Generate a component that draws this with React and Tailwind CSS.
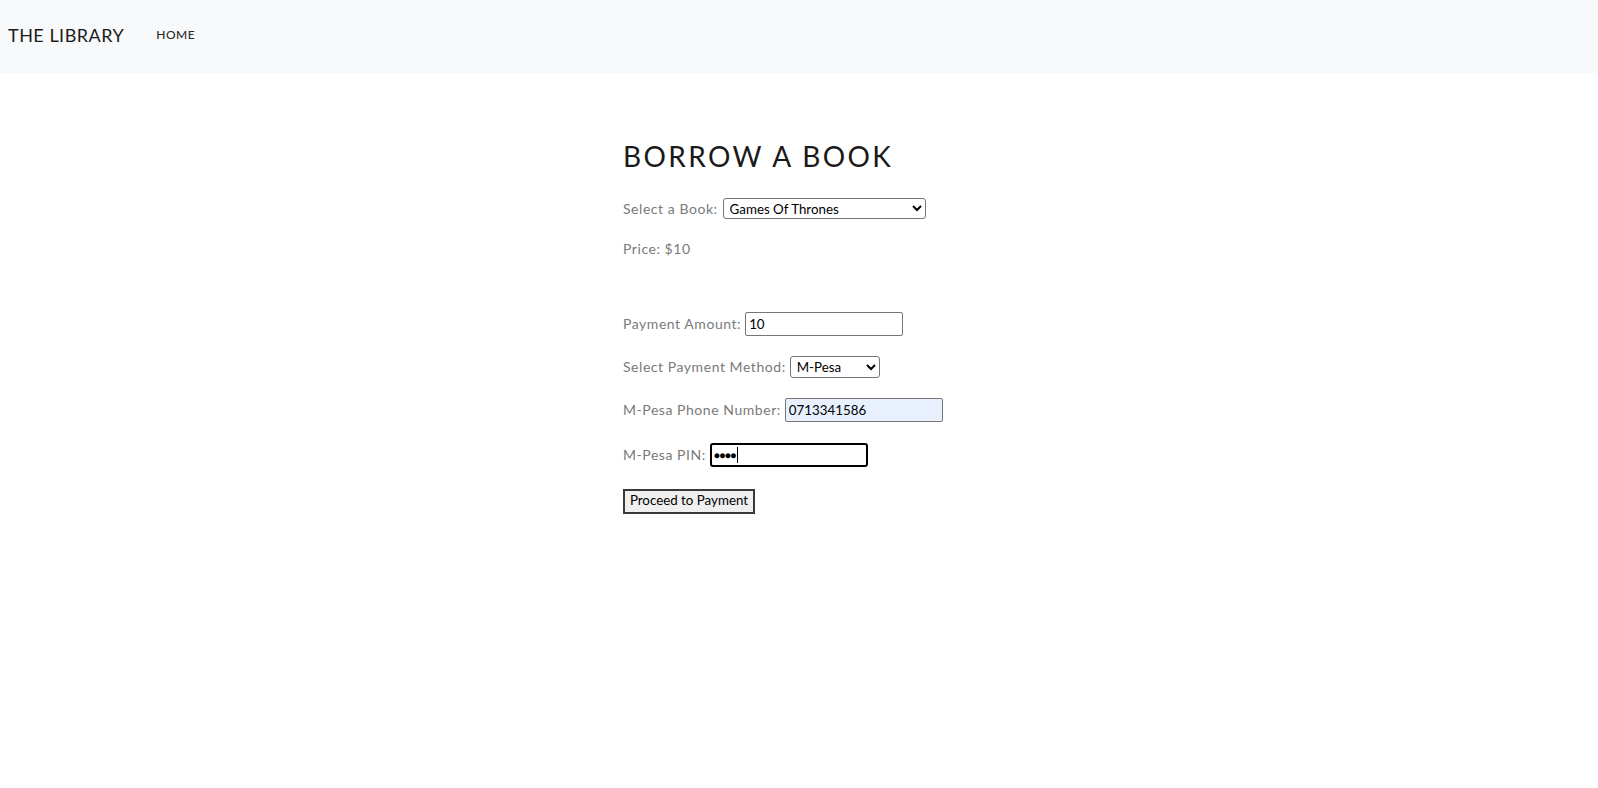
import React from "react";

export default function App() {
  const font = { fontFamily: "Lato, 'Noto Sans', sans-serif" };
  return (
    <div className="min-h-[788px] bg-white" style={font}>
      <nav className="h-[73px] bg-[#f8f9fa] flex items-center pl-[8px]">
        <span className="text-[18px] text-[#1b1b1b] tracking-[0.5px] leading-[20px] pb-[4px]">THE LIBRARY</span>
        <span className="ml-[32px] text-[12px] tracking-[0.5px] text-[#2b2b2b] font-medium leading-[14px] pb-[4px]">HOME</span>
      </nav>
      <main className="mx-auto w-[352px] pt-[67px]">
        <h1 className="text-[28px] leading-[32px] tracking-[2.4px] text-[#1a1a1a]">BORROW A BOOK</h1>
        <div className="mt-[26px] flex items-center h-[21px]">
          <label className="text-[14px] tracking-[0.55px] text-[#7a7a7a] pb-[1px]">Select a Book:</label>
          <select className="ml-[5px] w-[203px] h-[21px] border border-[#767676] rounded-[3px] bg-white text-[13.33px] text-black pl-[2px]">
            <option>Games Of Thrones</option>
          </select>
        </div>
        <div className="mt-[19px] h-[21px] flex items-center text-[14px] tracking-[0.55px] text-[#7a7a7a]">Price: $10</div>
        <div className="mt-[53px] flex items-center h-[24px]">
          <label className="text-[14px] tracking-[0.55px] text-[#7a7a7a] pb-[2px]">Payment Amount:</label>
          <input readOnly value="10" className="ml-[4px] w-[158px] h-[24px] border border-[#767676] rounded-[2px] bg-white px-[3px] text-[13.33px] text-black outline-none" />
        </div>
        <div className="mt-[20px] flex items-center h-[22px]">
          <label className="text-[14px] tracking-[0.55px] text-[#7a7a7a] pb-[1px]">Select Payment Method:</label>
          <select className="ml-[4px] w-[90px] h-[22px] border border-[#767676] rounded-[3px] bg-white text-[13.33px] text-black pl-[2px]">
            <option>M-Pesa</option>
          </select>
        </div>
        <div className="mt-[20px] flex items-center h-[24px]">
          <label className="text-[14px] tracking-[0.55px] text-[#7a7a7a] pb-[2px]">M-Pesa Phone Number:</label>
          <input readOnly value="0713341586" className="ml-[4px] w-[158px] h-[24px] border border-[#767676] rounded-[2px] bg-[#e8f0fe] px-[3px] text-[13.33px] text-black outline-none" />
        </div>
        <div className="mt-[21px] flex items-center h-[24px]">
          <label className="text-[14px] tracking-[0.55px] text-[#7a7a7a] pb-[2px]">M-Pesa PIN:</label>
          <div className="ml-[4px] w-[158px] h-[24px] border-2 border-black rounded-[3px] bg-white px-[2px] flex items-center text-[13.33px] text-black">
            <span className="text-[10px] tracking-[-0.5px]">●●●●</span>
            <span className="ml-[1px] w-[1px] h-[16px] bg-black"></span>
          </div>
        </div>
        <div className="mt-[20px]">
          <button className="w-[132px] h-[25px] bg-[#efefef] border-2 border-[#3a3a3a] text-[13.33px] text-black">Proceed to Payment</button>
        </div>
      </main>
    </div>
  );
}
